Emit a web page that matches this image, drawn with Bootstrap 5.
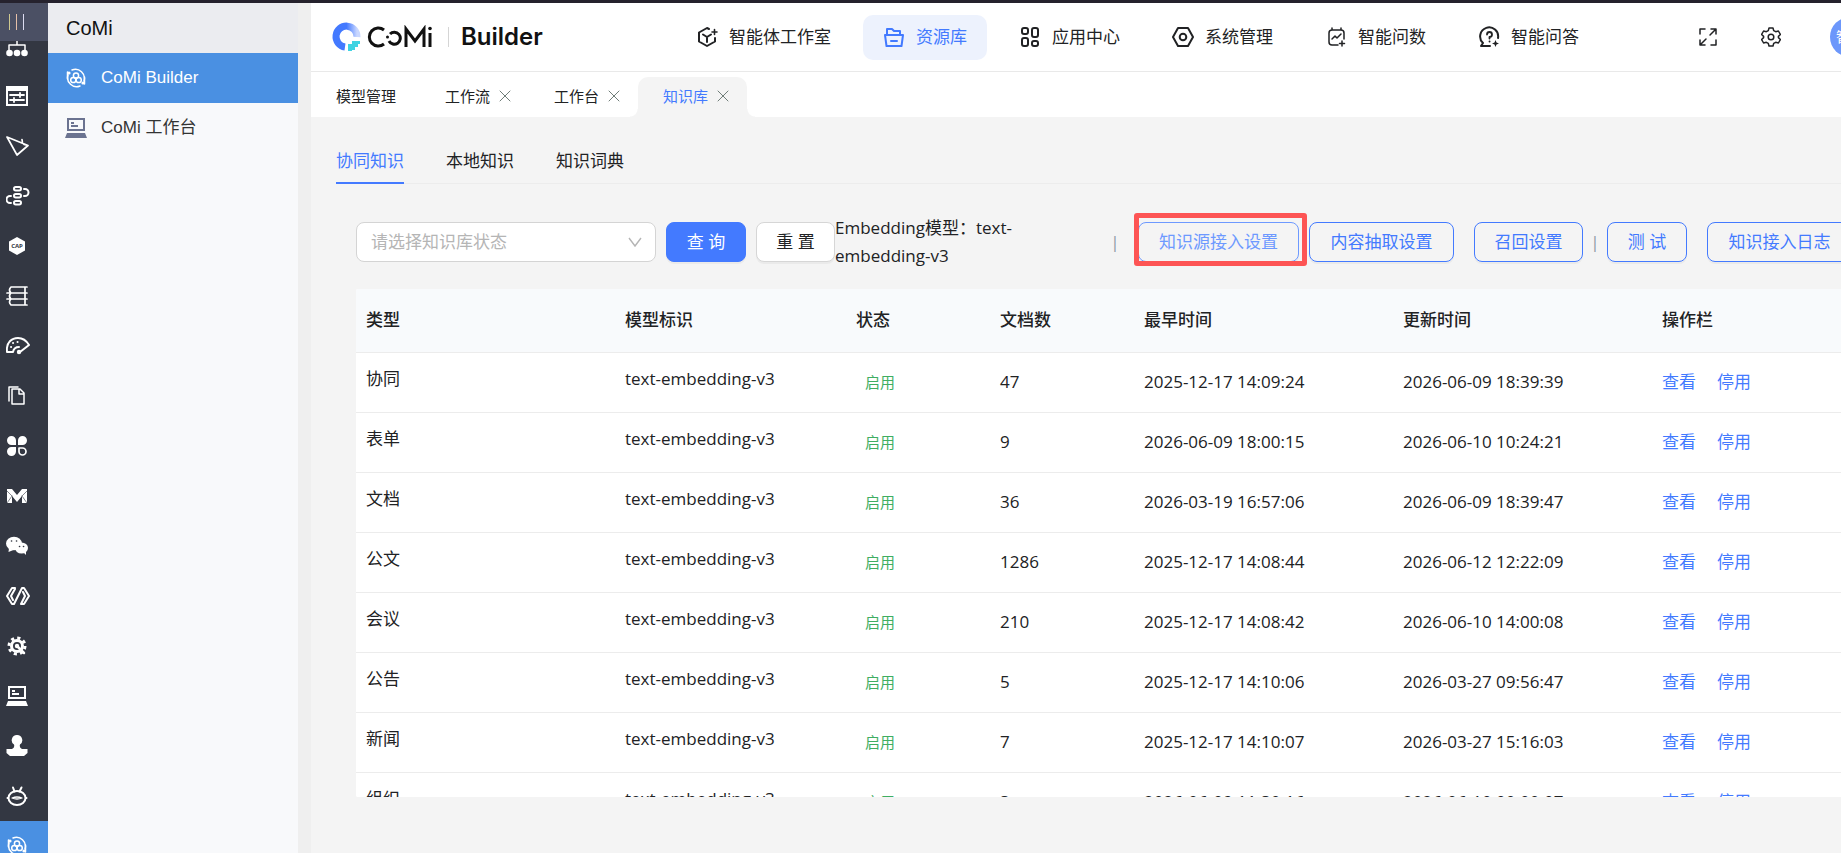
<!DOCTYPE html>
<html lang="zh-CN">
<head>
<meta charset="utf-8">
<meta name="viewport" content="width=device-width, initial-scale=1">
<title>CoMi Builder</title>
<link href="https://cdn.jsdelivr.net/npm/bootstrap@5.3.0/dist/css/bootstrap.min.css" rel="stylesheet">
<style>
  :root { --brand: #437aff; --side: #4a90e2; --ink: #212224; --canvas: #f4f4f4; }
  body { font-family: "Open Sans", "Noto Sans CJK SC", sans-serif; font-size: 17px; line-height: 28px; color: var(--ink); background: var(--canvas); }
  a { text-decoration: none; }
  svg { display: block; flex: none; }
  .ic { fill: none; stroke: currentColor; stroke-width: 2; stroke-linejoin: round; stroke-linecap: round; }
  .ic.thin { stroke-width: 1; }
  .ic.light-line { stroke-width: 1.5; }
  .ic .fl, symbol .fl { fill: currentColor; stroke: none; }
  .app-shell { border-top: 3px solid #25222d; }

  .rail { width: 48px; background: #333742; }
  .rail-toggle { height: 38px; background: #4b5064; padding-left: 8px; border: 0; }
  .rail-item { height: 50px; padding-left: 6px; color: #fff; flex: none; }
  .rail-item.is-cut { height: 30px; padding-bottom: 14px; overflow: hidden; }
  .rail-item.active { background: var(--side); }

  .side { width: 250px; background: #f8f9fb; font-family: "Liberation Sans", "Noto Sans CJK SC", sans-serif; }
  .side-title { height: 50px; padding-left: 18px; font-size: 20px; background: #ebecf0; color: #111; }
  .side-link { height: 50px; padding-left: 17px; gap: 14px; color: #333; }
  .side-link svg { color: #6b7390; }
  .side-link.active { background: var(--side); color: #fff; }
  .side-link.active svg { color: #fff; }
  .gutter { width: 13px; background: #efefef; }

  .work { min-width: 0; }
  /* the workspace is wider than the pane and runs past its right edge */
  .work-body { margin-right: -58px; }
  .topbar { height: 69px; border-bottom: 1px solid #e9e9e9; padding: 0 29px 0 20px; background: #fff; }
  .brand-name { font-family: Inter, sans-serif; font-weight: 600; font-size: 24px; color: #111; }
  .brand-rule { width: 1px; height: 20px; background: #d5d5d5; margin: 0 12px 0 15px; }
  .main-nav { gap: 12px; margin: 0 100px 0 auto; }
  .main-nav a { height: 45px; padding: 0 20px; gap: 11px; border-radius: 10px; color: var(--ink); }
  .main-nav a.active { background: #edf2fd; color: var(--brand); }
  .tool-btn { border: 0; background: none; padding: 0; color: var(--ink); }
  .tools { gap: 44px; }
  .avatar { width: 40px; height: 40px; background: #6c97fb; color: #fff; font-size: 14px; margin-left: 5px; }

  .page-tabs { height: 45px; background: #fff; font-size: 15px; }
  .page-tab { height: 40px; padding: 0 18px 2px 25px; gap: 9px; color: var(--ink); position: relative; }
  .page-tab.first-tab { padding-right: 24px; }
  .page-tab.active { background: var(--canvas); color: var(--brand); border-radius: 10px 10px 0 0; }
  .page-tab.active::before, .page-tab.active::after { content: ""; position: absolute; bottom: 0; width: 8px; height: 8px; }
  .page-tab.active::before { right: 100%; background: radial-gradient(circle at 0 0, #fff 7px, var(--canvas) 8px); }
  .page-tab.active::after { left: 100%; background: radial-gradient(circle at 100% 0, #fff 7px, var(--canvas) 8px); }
  .tab-x { color: #6f7d78; }

  .sub-tabs { margin: 30px 25px 0; gap: 42px; border-bottom: 1px solid #ececec; }
  .sub-tabs a { color: var(--ink); height: 37px; border-bottom: 2px solid transparent; margin-bottom: -1px; }
  .sub-tabs a.active { color: var(--brand); border-color: var(--brand); }

  .filters { margin: 34px 0 0 45px; height: 48px; }
  .status-select { width: 300px; height: 40px; border: 1px solid #d4d4d4; border-radius: 8px; color: #b5b5b5; font-size: 17px; line-height: 24px; padding: 0 36px 0 14px; background-position: right 13px center; background-size: 14px 14px;
    background-image: url("data:image/svg+xml,%3csvg xmlns='http://www.w3.org/2000/svg' viewBox='0 0 14 14'%3e%3cpath fill='none' stroke='%23b5b5b5' stroke-width='1.4' d='M1 3l6 8 6-8'/%3e%3c/svg%3e"); }
  .act { height: 40px; border-radius: 8px; border: 1px solid var(--brand); background: transparent; color: var(--brand); padding: 0 16px; white-space: nowrap; flex: none; font-size: 17px; box-shadow: 0 2px 0 #0000000a; line-height: 28px; }
  .act.solid { background: var(--brand); color: #fff; width: 80px; margin: 0 10px; }
  .act.plain { background: #fff; border-color: #d6d6d6; color: var(--ink); width: 79px; }
  .act.short { width: 80px; }
  .act.mid { width: 109px; }
  .act.wide { width: 145px; }
  .act.widest { width: 161px; color: #6d99ff; border-color: #6d99ff; }
  .model-note { width: 236px; }
  .filter-actions { margin: 0 47px 0 auto; }
  .spaced { margin-left: 20px; }
  .bar-sep { width: 24px; color: #8b9aa5; text-align: center; flex: none; }
  .callout { position: relative; margin: 0 10px 0 11px; }
  .callout::after { content: ""; position: absolute; inset: -9px -8px -4px -4px; border: 5px solid #fd5454; border-radius: 3px; pointer-events: none; }

  .grid-wrap { margin: 23px 29px 57px 45px; height: 508px; overflow: hidden; background: #fff; border-radius: 2px; }
  .grid-wrap table { table-layout: fixed; width: 100%; margin: 0; }
  .grid-wrap th { height: 63px; background: #f8fafc; font-weight: 500; padding: 0 10px; border-bottom: 1px solid #ececec; vertical-align: middle; color: var(--ink); }
  .grid-wrap td { height: 60px; padding: 0 10px; border-bottom: 1px solid #ececec; vertical-align: middle; color: var(--ink); background: #fff; }
  .grid-wrap td.hi { padding-bottom: 6px; }
  .c-l { width: 259px; } .c-m { width: 231px; } .c-s { width: 144px; }
  .on { color: #3fae62; font-size: 15px; padding-left: 9px; }
  td a { color: var(--brand); margin-right: 21px; }
</style>
</head>
<body>
<svg width="0" height="0" class="position-absolute" aria-hidden="true">
  <symbol id="i-comi" viewBox="0 0 22 22"><path d="M7 3a9 9 0 0 1 12 11M15 19A9 9 0 0 1 3 8"/><circle cx="4" cy="6" r="1.6" class="fl"/><circle cx="18" cy="16" r="1.6" class="fl"/><path d="M2.500 5v7M19.500 10v7"/><circle cx="11" cy="8.500" r="2.600"/><circle cx="8.300" cy="13" r="2.600"/><circle cx="13.700" cy="13" r="2.600"/></symbol>
  <symbol id="i-pc" viewBox="0 0 22 22"><path class="fl" fill-rule="evenodd" d="M2 1h18v13H2zM4 3v9h14V3zM2 16h18l2 5H0z"/><path d="M6 6h3M6 9h7" stroke-linecap="butt" stroke-width="1.800"/></symbol>
</svg>
<div class="app-shell d-flex vh-100 overflow-hidden">
  <nav class="rail d-flex flex-column flex-shrink-0 overflow-hidden" aria-label="应用">
    <button class="rail-toggle d-flex align-items-center flex-shrink-0" aria-label="菜单"><svg width="18" height="18" fill="none" stroke-width="1"><path d="M1.500 1v16" stroke="#cfc98f"/><path d="M8.500 1v16" stroke="#e6c0a8"/><path d="M15.500 1v16" stroke="#dcdcf0"/></svg></button>
    <a href="#" class="rail-item is-cut d-flex align-items-end" aria-label="组织"><svg class="ic" width="22" height="16"><path d="M11 0v4M3 9V4h16v5" stroke-width="1.500"/><circle class="fl" cx="3.500" cy="12" r="3.300"/><circle class="fl" cx="11" cy="12" r="3.300"/><circle class="fl" cx="18.500" cy="12" r="3.300"/></svg></a>
    <a href="#" class="rail-item d-flex align-items-center" aria-label="设置"><svg class="ic" width="22" height="20"><path class="fl" fill-rule="evenodd" d="M0 0h22v20H0zM2 5v13h18V5z"/><path d="M4 9h14M4 14h14M14 7v4M8 12v4" stroke-width="1.800"/></svg></a>
    <a href="#" class="rail-item d-flex align-items-center" aria-label="发送"><svg class="ic" width="24" height="20"><path d="M1 1l21 8.500L11 19zM16 3.500l.5 3.500M22 9.500l-4-1" stroke-width="1.700"/></svg></a>
    <a href="#" class="rail-item d-flex align-items-center" aria-label="流程"><svg class="ic" width="24" height="20"><rect x="8" y="1" width="7" height="3.500" rx="1.700"/><rect x="8" y="8" width="7" height="3.500" rx="1.700"/><rect x="8" y="15" width="7" height="3.500" rx="1.700"/><path d="M18 3h1a3.500 3.500 0 0 1 0 7h-1M5 10H4a3.500 3.500 0 0 0 0 7h1"/></svg></a>
    <a href="#" class="rail-item d-flex align-items-center" aria-label="CAP"><svg class="ic" width="22" height="20"><path class="fl" d="M11 1l8 4.500v9L11 19l-8-4.500v-9z"/><text x="11" y="12" font-size="6" font-weight="700" fill="#333742" stroke="none" text-anchor="middle">CAP</text></svg></a>
    <a href="#" class="rail-item d-flex align-items-center" aria-label="文库"><svg class="ic" width="22" height="20"><path d="M21 1H5Q2 4 5 7h16M1 7h20M19 7v6M5 7Q2 10 5 13M1 13h20M5 13Q2 16 5 19h16M19 1v6M19 13v6" stroke-width="1.700"/></svg></a>
    <a href="#" class="rail-item d-flex align-items-center" aria-label="仪表盘"><svg class="ic" width="24" height="18"><path d="M1 15C0 5 6 1 12 1c5 0 8 2 11 7l-9 7M1 15h6q1-5 6-5"/><circle class="fl" cx="13" cy="15" r="2.200"/><path d="M5 10h.1M7 6h.1M11.500 5h.1"/></svg></a>
    <a href="#" class="rail-item d-flex align-items-center" aria-label="文件"><svg class="ic" width="22" height="20"><path d="M6 3h8l4 4v11H6zM13 3v5h5M3 15V1h9" stroke-width="1.500"/></svg></a>
    <a href="#" class="rail-item d-flex align-items-center" aria-label="应用"><svg class="ic" width="22" height="20"><path class="fl" d="M10 9H5.500A4.500 4.500 0 1 1 10 4.500zM12 9V4.500A4.500 4.500 0 1 1 16.500 9zM10 11v4.500A4.500 4.500 0 1 1 5.500 11z"/><path d="M13 12h3.500a3.500 3.500 0 1 1-3.500 3.500z" stroke-width="1.700"/></svg></a>
    <a href="#" class="rail-item d-flex align-items-center" aria-label="M"><svg class="ic" width="22" height="16"><path class="fl" d="M1 1h5l5 6 5-6h5v14h-5V8l-5 6-5-6v7H1z"/><path d="M1 3l5 5M21 3l-5 5M1 15l5-7M21 15l-5-7" stroke="#333742" stroke-width=".6"/></svg></a>
    <a href="#" class="rail-item d-flex align-items-center" aria-label="微信"><svg class="ic" width="22" height="20"><ellipse class="fl" cx="8" cy="7.500" rx="8" ry="6.800"/><path class="fl" d="M3 12l-.5 4 5-2z"/><ellipse class="fl" cx="15.500" cy="12" rx="6.500" ry="5.600"/><path class="fl" d="M17 16l3 3v-4z"/><path d="M5.500 5h.1M10.500 5h.1M13.500 10.500h.1M17.500 10.500h.1" stroke="#333742" stroke-width="1.600"/></svg></a>
    <a href="#" class="rail-item d-flex align-items-center" aria-label="代码"><svg class="ic" width="24" height="18"><path d="M9 1H6L1 9l5 8h2l8-16h2l5 8-5 8h-3M9 2L5 9l2 4M17 5l2 4-4 8"/></svg></a>
    <a href="#" class="rail-item d-flex align-items-center" aria-label="维护"><svg class="ic" width="22" height="20"><circle cx="11" cy="10" r="5.500" stroke-width="3"/><circle cx="11" cy="10" r="8" stroke-width="3" stroke-dasharray="3.140 3.140" stroke-linecap="butt"/><path d="M11 10l7 7" stroke-width="2.500"/><circle class="fl" cx="11" cy="10" r="2.200"/></svg></a>
    <a href="#" class="rail-item d-flex align-items-center" aria-label="工作台"><svg class="ic" width="22" height="22"><use href="#i-pc"/></svg></a>
    <a href="#" class="rail-item d-flex align-items-center" aria-label="印章"><svg class="ic" width="22" height="22"><path class="fl" d="M11 0a5.200 5.200 0 0 1 3 9.500q-1 3 2 4.500h5.500v4L18 21H4L.5 18v-4H6q3-1.500 2-4.500A5.200 5.200 0 0 1 11 0z"/></svg></a>
    <a href="#" class="rail-item d-flex align-items-center" aria-label="机器人"><svg class="ic" width="22" height="20"><ellipse cx="11" cy="12" rx="8.500" ry="7"/><path d="M7 1.500l1.500 4M15.500 1.500L13.500 5.500M1.500 12h.5M20 12h.5"/><path d="M6 12q5-2 10 0-5 2-10 0z" stroke-width="1.300"/></svg></a>
    <a href="#" class="rail-item active d-flex align-items-center" aria-label="CoMi"><svg class="ic light-line" width="22" height="22"><use href="#i-comi"/></svg></a>
  </nav>

  <aside class="side flex-shrink-0">
    <div class="side-title d-flex align-items-center">CoMi</div>
    <a href="#" class="side-link active d-flex align-items-center"><svg class="ic light-line" width="22" height="22"><use href="#i-comi"/></svg><span>CoMi Builder</span></a>
    <a href="#" class="side-link d-flex align-items-center"><svg class="ic" width="22" height="22"><use href="#i-pc"/></svg><span>CoMi 工作台</span></a>
  </aside>
  <div class="gutter flex-shrink-0"></div>

  <main class="work flex-grow-1 overflow-hidden">
    <div class="work-body">
      <header class="topbar d-flex align-items-center">
        <div class="d-flex align-items-center">
          <svg width="30" height="30" viewBox="0 0 30 30"><defs><linearGradient id="ring" x1="0" y1="0" x2="1" y2="0"><stop offset=".5" stop-color="#4379ff"/><stop offset="1" stop-color="#c9d7ff"/></linearGradient></defs><path d="M14 25A10.500 10.500 0 1 1 26 15" fill="none" stroke="url(#ring)" stroke-width="7"/><path d="M17 29v-7h4v-3h8v3h-2v3h-3v3h-3v1z" fill="#3fd3e2"/></svg>
          <svg class="ms-1" width="68" height="24" fill="none" stroke="#111" stroke-width="3" role="img" aria-label="CoMi"><path d="M19 5a9 9 0 1 0 0 14M25 9a6 6 0 1 1-1 7M41 22V4l9 12 9-12v18M65 8v14"/><circle cx="65" cy="3.500" r="1.800" fill="#111" stroke="none"/><circle cx="22.500" cy="12" r="1.500" fill="#111" stroke="none"/></svg>
          <span class="brand-rule"></span><span class="brand-name">Builder</span>
        </div>
        <nav class="main-nav d-flex">
          <a href="#" class="d-flex align-items-center"><svg class="ic" width="22" height="22"><path d="M13 3l-2-1-8 4.500v9L11 20l8-4.500V12M7 8.500l4 2.500 4-2.500M11 11v5"/><path d="M18.500 3.500v5M16 6h5" stroke-width="1.600"/></svg>智能体工作室</a>
          <a href="#" class="active d-flex align-items-center"><svg class="ic" width="22" height="22"><path d="M4 9V3h5l2 2h6v4M2 9h18l-1.500 11h-15zM8 15h6"/></svg>资源库</a>
          <a href="#" class="d-flex align-items-center"><svg class="ic" width="22" height="22"><rect x="3" y="2" width="6" height="6" rx="2"/><rect x="13" y="2" width="6" height="9" rx="2"/><rect x="3" y="12" width="6" height="8" rx="2"/><rect x="13" y="15" width="6" height="5" rx="2"/></svg>应用中心</a>
          <a href="#" class="d-flex align-items-center"><svg class="ic" width="22" height="22"><path d="M6 2h10l5 9-5 9H6l-5-9z"/><circle cx="11" cy="11" r="3.300"/></svg>系统管理</a>
          <a href="#" class="d-flex align-items-center"><svg class="ic light-line" width="22" height="22"><path d="M13 19H7a3 3 0 0 1-3-3V7a3 3 0 0 1 3-3h9a3 3 0 0 1 3 3v6M7 2v2M16 2v2M7 13l3-3 2 2 4-4M17 15v5M14.500 17.500h5"/></svg>智能问数</a>
          <a href="#" class="d-flex align-items-center"><svg class="ic" width="22" height="22"><path d="M12 20H3l2-3a9 9 0 1 1 15-5"/><path d="M9 8.500a2.500 2.500 0 1 1 2.500 2.500v1.500M11.500 15.500h.1" stroke-width="1.800"/><path class="fl" d="M17.500 14l1 2.500 2.500 1-2.500 1-1 2.500-1-2.500-2.500-1 2.500-1z"/></svg>智能问答</a>
        </nav>
        <div class="tools d-flex align-items-center">
          <button class="tool-btn" aria-label="全屏"><svg class="ic light-line" width="18" height="18"><path d="M1 6V1h5M12 1h5v5M17 12v5h-5M6 17H1v-5M11 7l5-5M7 11l-5 5"/></svg></button>
          <button class="tool-btn" aria-label="设置"><svg class="ic light-line" width="20" height="20"><path d="M8 1h4l.7 2.600 2 1.100L17.400 4l2 3.500-2 1.900v1.200l2 1.900-2 3.500-2.700-.7-2 1.100L12 19H8l-.7-2.600-2-1.100-2.700.7-2-3.500 2-1.900V9.400l-2-1.900 2-3.500 2.700.7 2-1.100z"/><circle cx="10" cy="10" r="2.800"/></svg></button>
          <span class="avatar rounded-circle d-flex align-items-center justify-content-center">智能</span>
        </div>
      </header>

      <div class="page-tabs d-flex align-items-end">
        <a href="#" class="page-tab first-tab d-flex align-items-center">模型管理</a>
        <a href="#" class="page-tab d-flex align-items-center">工作流<svg class="tab-x ic thin" width="12" height="12"><path d="M1 1l10 10M11 1L1 11"/></svg></a>
        <a href="#" class="page-tab d-flex align-items-center">工作台<svg class="tab-x ic thin" width="12" height="12"><path d="M1 1l10 10M11 1L1 11"/></svg></a>
        <a href="#" class="page-tab active d-flex align-items-center">知识库<svg class="tab-x ic thin" width="12" height="12"><path d="M1 1l10 10M11 1L1 11"/></svg></a>
      </div>

      <nav class="sub-tabs d-flex">
        <a href="#" class="active">协同知识</a><a href="#">本地知识</a><a href="#">知识词典</a>
      </nav>

      <div class="filters d-flex align-items-center">
        <select class="form-select status-select flex-shrink-0" aria-label="知识库状态"><option>请选择知识库状态</option></select>
        <button class="act solid">查 询</button>
        <button class="act plain">重 置</button>
        <div class="model-note flex-shrink-0">Embedding模型：text-embedding-v3</div>
        <div class="filter-actions d-flex align-items-center">
          <span class="bar-sep">|</span>
          <span class="callout d-flex"><button class="act widest">知识源接入设置</button></span>
          <button class="act wide">内容抽取设置</button>
          <button class="act mid spaced">召回设置</button>
          <span class="bar-sep">|</span>
          <button class="act short">测 试</button>
          <button class="act wide spaced">知识接入日志</button>
        </div>
      </div>

      <div class="grid-wrap">
        <table>
          <colgroup><col class="c-l"><col class="c-m"><col class="c-s"><col class="c-s"><col class="c-l"><col class="c-l"><col></colgroup>
          <thead><tr><th>类型</th><th>模型标识</th><th>状态</th><th>文档数</th><th>最早时间</th><th>更新时间</th><th>操作栏</th></tr></thead>
          <tbody>
            <tr><td class="hi">协同</td><td class="hi">text-embedding-v3</td><td><span class="on">启用</span></td><td>47</td><td>2025-12-17 14:09:24</td><td>2026-06-09 18:39:39</td><td><a href="#">查看</a><a href="#">停用</a></td></tr>
            <tr><td class="hi">表单</td><td class="hi">text-embedding-v3</td><td><span class="on">启用</span></td><td>9</td><td>2026-06-09 18:00:15</td><td>2026-06-10 10:24:21</td><td><a href="#">查看</a><a href="#">停用</a></td></tr>
            <tr><td class="hi">文档</td><td class="hi">text-embedding-v3</td><td><span class="on">启用</span></td><td>36</td><td>2026-03-19 16:57:06</td><td>2026-06-09 18:39:47</td><td><a href="#">查看</a><a href="#">停用</a></td></tr>
            <tr><td class="hi">公文</td><td class="hi">text-embedding-v3</td><td><span class="on">启用</span></td><td>1286</td><td>2025-12-17 14:08:44</td><td>2026-06-12 12:22:09</td><td><a href="#">查看</a><a href="#">停用</a></td></tr>
            <tr><td class="hi">会议</td><td class="hi">text-embedding-v3</td><td><span class="on">启用</span></td><td>210</td><td>2025-12-17 14:08:42</td><td>2026-06-10 14:00:08</td><td><a href="#">查看</a><a href="#">停用</a></td></tr>
            <tr><td class="hi">公告</td><td class="hi">text-embedding-v3</td><td><span class="on">启用</span></td><td>5</td><td>2025-12-17 14:10:06</td><td>2026-03-27 09:56:47</td><td><a href="#">查看</a><a href="#">停用</a></td></tr>
            <tr><td class="hi">新闻</td><td class="hi">text-embedding-v3</td><td><span class="on">启用</span></td><td>7</td><td>2025-12-17 14:10:07</td><td>2026-03-27 15:16:03</td><td><a href="#">查看</a><a href="#">停用</a></td></tr>
            <tr><td class="hi">组织</td><td class="hi">text-embedding-v3</td><td><span class="on">启用</span></td><td>3</td><td>2026-06-09 11:30:16</td><td>2026-06-10 00:00:07</td><td><a href="#">查看</a><a href="#">停用</a></td></tr>
          </tbody>
        </table>
      </div>
    </div>
  </main>
</div>
<script src="https://cdn.jsdelivr.net/npm/bootstrap@5.3.0/dist/js/bootstrap.bundle.min.js"></script>
</body>
</html>
